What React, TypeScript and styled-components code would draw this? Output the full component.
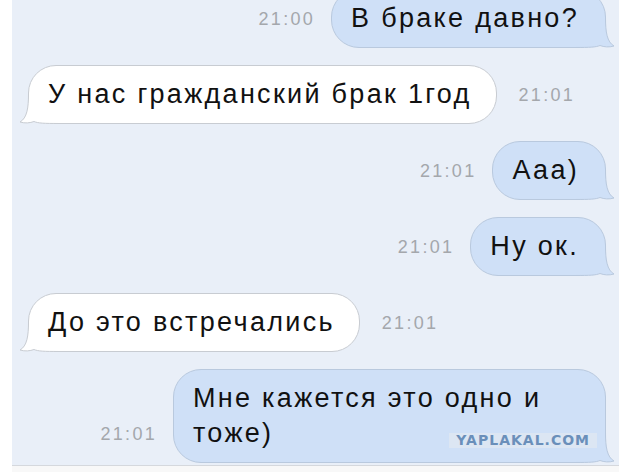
import styled, { createGlobalStyle } from "styled-components";

const Global = createGlobalStyle`
  html, body { margin: 0; padding: 0; background: #fff; }
  body { font-family: "Liberation Sans", Arial, sans-serif; }
`;

type Side = "in" | "out";
type Msg = { side: Side; text: string; time: string; width?: number };

const messages: Msg[] = [
  { side: "out", text: "В браке давно?", time: "21:00" },
  { side: "in", text: "У нас гражданский брак 1год", time: "21:01" },
  { side: "out", text: "Ааа)", time: "21:01" },
  { side: "out", text: "Ну ок.", time: "21:01" },
  { side: "in", text: "До это встречались", time: "21:01" },
  { side: "out", text: "Мне кажется это одно и тоже)", time: "21:01", width: 433 },
];

const App = () => {
  return (
    <Screen>
      <Global />
      <Main>
        <Strip />
        <ChatArea>
          <List>
            {messages.map((m, i) => (
              <Row key={i} side={m.side}>
                <Time side={m.side}>{m.time}</Time>
                <Bubble side={m.side} style={m.width ? { width: m.width } : undefined}>
                  <Tail side={m.side} viewBox="0 0 40 30" width="40" height="30">
                    <path
                      d="M30.5 0 C30.5 14 32 24 39 28 C34 29.5 29 29 25 27.5 C21 29.2 15 29.5 0 29.5 L0 0 Z"
                      className="fill"
                    />
                    <path
                      d="M30.5 0 C30.5 14 32 24 39 28 C34 29.5 29 29 25 27.5 C21 29.2 15 29.5 0 29.5"
                      className="line"
                    />
                  </Tail>
                  <Text>{m.text}</Text>
                </Bubble>
              </Row>
            ))}
          </List>
          <Watermark>YAPLAKAL.COM</Watermark>
        </ChatArea>
      </Main>
      <Footer />
    </Screen>
  );
};

export default App;

const Screen = styled.div`
  width: 619px;
  height: 472px;
  overflow: hidden;
  display: flex;
  flex-direction: column;
  background: #fff;
`;

const Main = styled.div`
  display: flex;
  height: 465px;
`;

const Strip = styled.div`
  width: 12px;
  background: #fff;
`;

const ChatArea = styled.div`
  flex: 1;
  position: relative;
  overflow: hidden;
  background: #e9eff8;
  padding: 0 13px 0 16px;
`;

const List = styled.div`
  display: flex;
  flex-direction: column;
  gap: 17px;
  margin-top: -11px;
`;

const Row = styled.div<{ side: Side }>`
  display: flex;
  align-items: flex-end;
  justify-content: ${(p) => (p.side === "out" ? "flex-end" : "flex-start")};
  gap: ${(p) => (p.side === "out" ? "16px" : "22px")};
`;

const Time = styled.span<{ side: Side }>`
  order: ${(p) => (p.side === "out" ? 0 : 2)};
  font-size: 18px;
  letter-spacing: 2.3px;
  color: #a4a7ac;
  margin-bottom: 18px;
  white-space: nowrap;
`;

const Bubble = styled.div<{ side: Side }>`
  order: 1;
  position: relative;
  box-sizing: border-box;
  border-radius: 28px;
  border: 1px solid ${(p) => (p.side === "out" ? "#b9c9de" : "#c8ccd2")};
  background: ${(p) => (p.side === "out" ? "#cfe0f7" : "#ffffff")};
  padding: ${(p) => (p.side === "out" ? "11px 26px 11px 19px" : "11px 24px 11px 19px")};
  font-size: 27px;
  line-height: 35px;
  letter-spacing: 2.3px;
  color: #111;
`;

const Tail = styled.svg<{ side: Side }>`
  position: absolute;
  bottom: -1px;
  ${(p) => (p.side === "out" ? "right: -10px;" : "left: -10px; transform: scaleX(-1);")}
  z-index: 0;
  overflow: visible;
  .fill {
    fill: ${(p) => (p.side === "out" ? "#cfe0f7" : "#ffffff")};
  }
  .line {
    fill: none;
    stroke: ${(p) => (p.side === "out" ? "#b9c9de" : "#c8ccd2")};
    stroke-width: 1;
  }
`;

const Text = styled.span`
  position: relative;
  z-index: 1;
`;

const Watermark = styled.div`
  position: absolute;
  right: 22px;
  bottom: 17px;
  padding: 0 7px;
  background: #dce6f3;
  color: #6a8fba;
  font-family: "DejaVu Sans", sans-serif;
  font-weight: bold;
  font-size: 14px;
  line-height: 15px;
  letter-spacing: 1px;
`;

const Footer = styled.div`
  height: 7px;
  box-sizing: border-box;
  border-top: 1px solid #d5d8dd;
  background: #f8f8f8;
  margin-left: 12px;
`;
